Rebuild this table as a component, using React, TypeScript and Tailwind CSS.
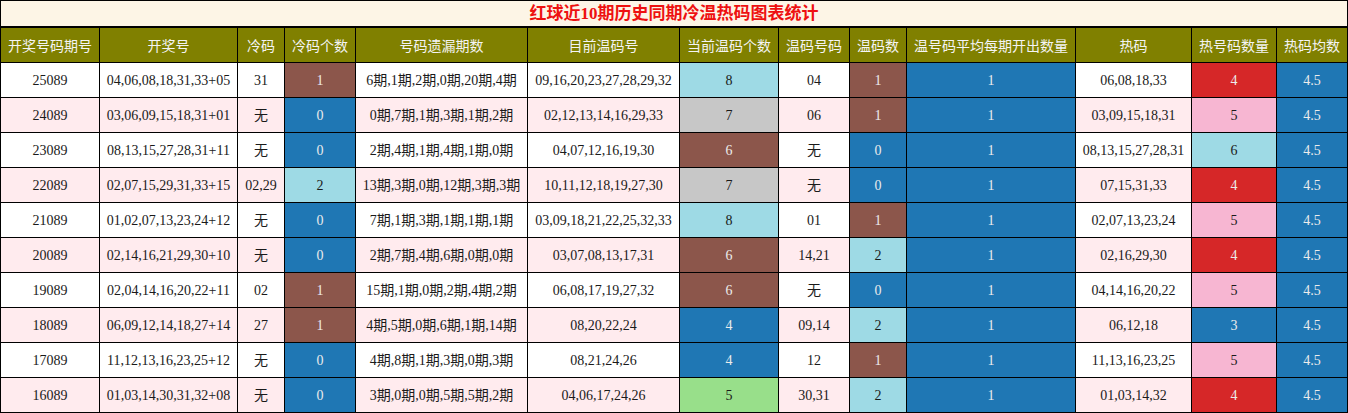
import React from "react";

type Tone = "brown" | "blue" | "light" | "gray" | "green" | "red" | "pink";

const TONE: Record<Tone, string> = {
  brown: "bg-[#8c564b] text-[#ececec]",
  blue: "bg-[#1f77b4] text-[#ececec]",
  light: "bg-[#9edae5] text-[#1a1a1a]",
  gray: "bg-[#c7c7c7] text-[#1a1a1a]",
  green: "bg-[#98df8a] text-[#1a1a1a]",
  red: "bg-[#d62728] text-[#ececec]",
  pink: "bg-[#f7b6d2] text-[#1a1a1a]",
};

const toneOf = (n: number, kind: "cold" | "warmCount" | "warm" | "hot"): Tone => {
  if (kind === "cold" || kind === "warm") return n === 0 ? "blue" : n === 1 ? "brown" : "light";
  if (kind === "warmCount") return n === 8 ? "light" : n === 7 ? "gray" : n === 6 ? "brown" : n === 5 ? "green" : "blue";
  return n === 4 ? "red" : n === 5 ? "pink" : n === 6 ? "light" : "blue";
};

const HEADERS = [
  "开奖号码期号",
  "开奖号",
  "冷码",
  "冷码个数",
  "号码遗漏期数",
  "目前温码号",
  "当前温码个数",
  "温码号码",
  "温码数",
  "温号码平均每期开出数量",
  "热码",
  "热号码数量",
  "热码均数",
];

type Row = [string, string, string, number, string, string, number, string, number, string, number];

const ROWS: Row[] = [
  ["25089", "04,06,08,18,31,33+05", "31", 1, "6期,1期,2期,0期,20期,4期", "09,16,20,23,27,28,29,32", 8, "04", 1, "06,08,18,33", 4],
  ["24089", "03,06,09,15,18,31+01", "无", 0, "0期,7期,1期,3期,1期,2期", "02,12,13,14,16,29,33", 7, "06", 1, "03,09,15,18,31", 5],
  ["23089", "08,13,15,27,28,31+11", "无", 0, "2期,4期,1期,4期,1期,0期", "04,07,12,16,19,30", 6, "无", 0, "08,13,15,27,28,31", 6],
  ["22089", "02,07,15,29,31,33+15", "02,29", 2, "13期,3期,0期,12期,3期,3期", "10,11,12,18,19,27,30", 7, "无", 0, "07,15,31,33", 4],
  ["21089", "01,02,07,13,23,24+12", "无", 0, "7期,1期,3期,1期,1期,1期", "03,09,18,21,22,25,32,33", 8, "01", 1, "02,07,13,23,24", 5],
  ["20089", "02,14,16,21,29,30+10", "无", 0, "2期,7期,4期,6期,0期,0期", "03,07,08,13,17,31", 6, "14,21", 2, "02,16,29,30", 4],
  ["19089", "02,04,14,16,20,22+11", "02", 1, "15期,1期,0期,2期,4期,2期", "06,08,17,19,27,32", 6, "无", 0, "04,14,16,20,22", 5],
  ["18089", "06,09,12,14,18,27+14", "27", 1, "4期,5期,0期,6期,1期,14期", "08,20,22,24", 4, "09,14", 2, "06,12,18", 3],
  ["17089", "11,12,13,16,23,25+12", "无", 0, "4期,8期,1期,3期,0期,3期", "08,21,24,26", 4, "12", 1, "11,13,16,23,25", 5],
  ["16089", "01,03,14,30,31,32+08", "无", 0, "3期,0期,0期,5期,5期,2期", "04,06,17,24,26", 5, "30,31", 2, "01,03,14,32", 4],
];

function Cell({ children, className = "" }: { children: React.ReactNode; className?: string }) {
  return (
    <div className={`flex h-[35px] items-center justify-center border-r border-b border-black whitespace-nowrap ${className}`}>
      {children}
    </div>
  );
}

export default function App() {
  return (
    <div className="w-[1348px] bg-white">
      <div className="grid grid-cols-[99px_138px_47px_71px_172px_152px_99px_71px_57px_169px_116px_85px_71px] border-t border-l border-black font-['Liberation_Serif','Noto_Sans_CJK_SC',serif] text-[14px]">
        <div className="col-span-13 flex h-[27px] items-center justify-center border-r border-b-2 border-black bg-[#fdf5e6] pt-[1px] font-['Liberation_Serif','Noto_Sans_CJK_SC',serif] text-[17px] font-bold text-[#ee1111]">
          红球近10期历史同期冷温热码图表统计
        </div>
        {HEADERS.map((h) => (
          <Cell key={h} className="bg-[#808000] font-['Noto_Sans_CJK_SC',sans-serif] text-[14px] text-[#f4f4f4]">
            {h}
          </Cell>
        ))}
        {ROWS.map((r, i) => {
          const bg = i % 2 === 0 ? "bg-white" : "bg-[#ffebee]";
          const plain = `${bg} text-[#1a1a1a]`;
          return (
            <React.Fragment key={r[0]}>
              <Cell className={plain}>{r[0]}</Cell>
              <Cell className={plain}>{r[1]}</Cell>
              <Cell className={plain}>{r[2]}</Cell>
              <Cell className={TONE[toneOf(r[3], "cold")]}>{r[3]}</Cell>
              <Cell className={plain}>{r[4]}</Cell>
              <Cell className={plain}>{r[5]}</Cell>
              <Cell className={TONE[toneOf(r[6], "warmCount")]}>{r[6]}</Cell>
              <Cell className={plain}>{r[7]}</Cell>
              <Cell className={TONE[toneOf(r[8], "warm")]}>{r[8]}</Cell>
              <Cell className={TONE.blue}>1</Cell>
              <Cell className={plain}>{r[9]}</Cell>
              <Cell className={TONE[toneOf(r[10], "hot")]}>{r[10]}</Cell>
              <Cell className={TONE.blue}>4.5</Cell>
            </React.Fragment>
          );
        })}
      </div>
    </div>
  );
}
